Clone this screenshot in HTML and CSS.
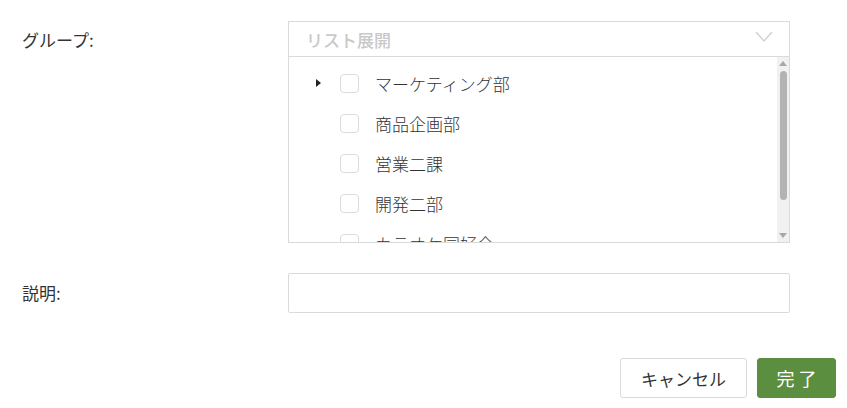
FILE: index.html
```html
<!DOCTYPE html>
<html lang="ja">
<head>
<meta charset="utf-8">
<link rel="stylesheet" href="styles.css">
</head>
<body>
<div class="form">
  <div class="row row-group">
    <div class="label">グループ:</div>
    <div class="select">
      <div class="select-head">
        <span class="placeholder">リスト展開</span>
        <svg class="chevron" width="18" height="11" viewBox="0 0 18 11"><polyline points="1,1 9,10 17,1" fill="none" stroke="#cfcfcf" stroke-width="1.2"/></svg>
      </div>
      <div class="panel">
        <ul class="list">
          <li class="item"><span class="caret"></span><span class="check"></span><span class="name">マーケティング部</span></li>
          <li class="item"><span class="caret hidden"></span><span class="check"></span><span class="name">商品企画部</span></li>
          <li class="item"><span class="caret hidden"></span><span class="check"></span><span class="name">営業二課</span></li>
          <li class="item"><span class="caret hidden"></span><span class="check"></span><span class="name">開発二部</span></li>
          <li class="item"><span class="caret hidden"></span><span class="check"></span><span class="name">カラオケ同好会</span></li>
        </ul>
        <div class="scrollbar">
          <span class="arrow up"></span>
          <div class="track"><div class="thumb"></div></div>
          <span class="arrow down"></span>
        </div>
      </div>
    </div>
  </div>
  <div class="row row-desc">
    <div class="label">説明:</div>
    <input class="input" type="text">
  </div>
  <div class="actions">
    <button class="btn btn-cancel">キャンセル</button>
    <button class="btn btn-ok">完 了</button>
  </div>
</div>
</body>
</html>
```

FILE: styles.css
```css
* { box-sizing: border-box; }
html, body { margin: 0; padding: 0; background: #fff; }
body {
  font-family: "Noto Sans CJK JP", "Noto Sans", sans-serif;
  color: #333;
  font-size: 17px;
}
.form {
  width: 847px;
  padding: 22px 11px 0 22px;
}
.row {
  display: flex;
  align-items: flex-start;
}
.label {
  width: 266px;
  flex: none;
  line-height: 36px;
  font-size: 17px;
  color: #333;
}
.row-group .select { margin-top: -1px; }
.select {
  width: 502px;
  border: 1px solid #dadada;
}
.select-head {
  height: 35px;
  display: flex;
  align-items: center;
  justify-content: space-between;
  padding: 0 16px 0 17px;
  border-bottom: 1px solid #dadada;
}
.placeholder {
  color: #c9c9c9;
  font-size: 17px;
  font-weight: 500;
}
.chevron { display: block; margin-top: -5px; }
.panel {
  display: flex;
  height: 185px;
}
.list {
  flex: 1;
  list-style: none;
  margin: 0;
  padding: 6px 0 0 27px;
  overflow: hidden;
}
.item {
  height: 40px;
  display: flex;
  align-items: center;
}
.caret {
  width: 0;
  height: 0;
  border-top: 4px solid transparent;
  border-bottom: 4px solid transparent;
  border-left: 5px solid #222;
  margin-right: 19px;
}
.caret.hidden { visibility: hidden; }
.check {
  width: 19px;
  height: 19px;
  border: 1px solid #dcdcdc;
  border-radius: 4px;
  margin-right: 16px;
  background: #fff;
}
.name {
  font-size: 17px;
  color: #333;
  font-weight: 300;
}
.scrollbar {
  width: 12px;
  background: #f1f1f1;
  display: flex;
  flex-direction: column;
  align-items: center;
}
.arrow {
  width: 0;
  height: 0;
  border-left: 4px solid transparent;
  border-right: 4px solid transparent;
}
.arrow.up {
  border-bottom: 5px solid #a8a8a8;
  margin-top: 4px;
}
.arrow.down {
  border-top: 5px solid #a8a8a8;
  margin-bottom: 4px;
}
.track {
  flex: 1;
  width: 100%;
  display: flex;
  justify-content: center;
  padding-top: 5px;
}
.thumb {
  width: 7px;
  height: 129px;
  background: #b3b3b3;
  border-radius: 4px;
}
.row-desc {
  margin-top: 30px;
}
.row-desc .label { line-height: 40px; }
.input {
  width: 502px;
  height: 40px;
  border: 1px solid #dadada;
  border-radius: 2px;
  margin: 0;
  padding: 0 10px;
  font: inherit;
  outline: none;
}
.actions {
  display: flex;
  justify-content: flex-end;
  gap: 10px;
  margin-top: 45px;
}
.btn {
  height: 40px;
  border-radius: 3px;
  font-family: "Noto Sans CJK JP", "Noto Sans", sans-serif;
  font-size: 17px;
  cursor: pointer;
  margin: 0;
  padding: 0;
}
.btn-cancel {
  width: 127px;
  background: #fff;
  border: 1px solid #d9d9d9;
  color: #333;
}
.btn-ok {
  width: 79px;
  background: #5b8e3e;
  border: 1px solid #5b8e3e;
  color: #fff;
  font-size: 18px;
}
```
